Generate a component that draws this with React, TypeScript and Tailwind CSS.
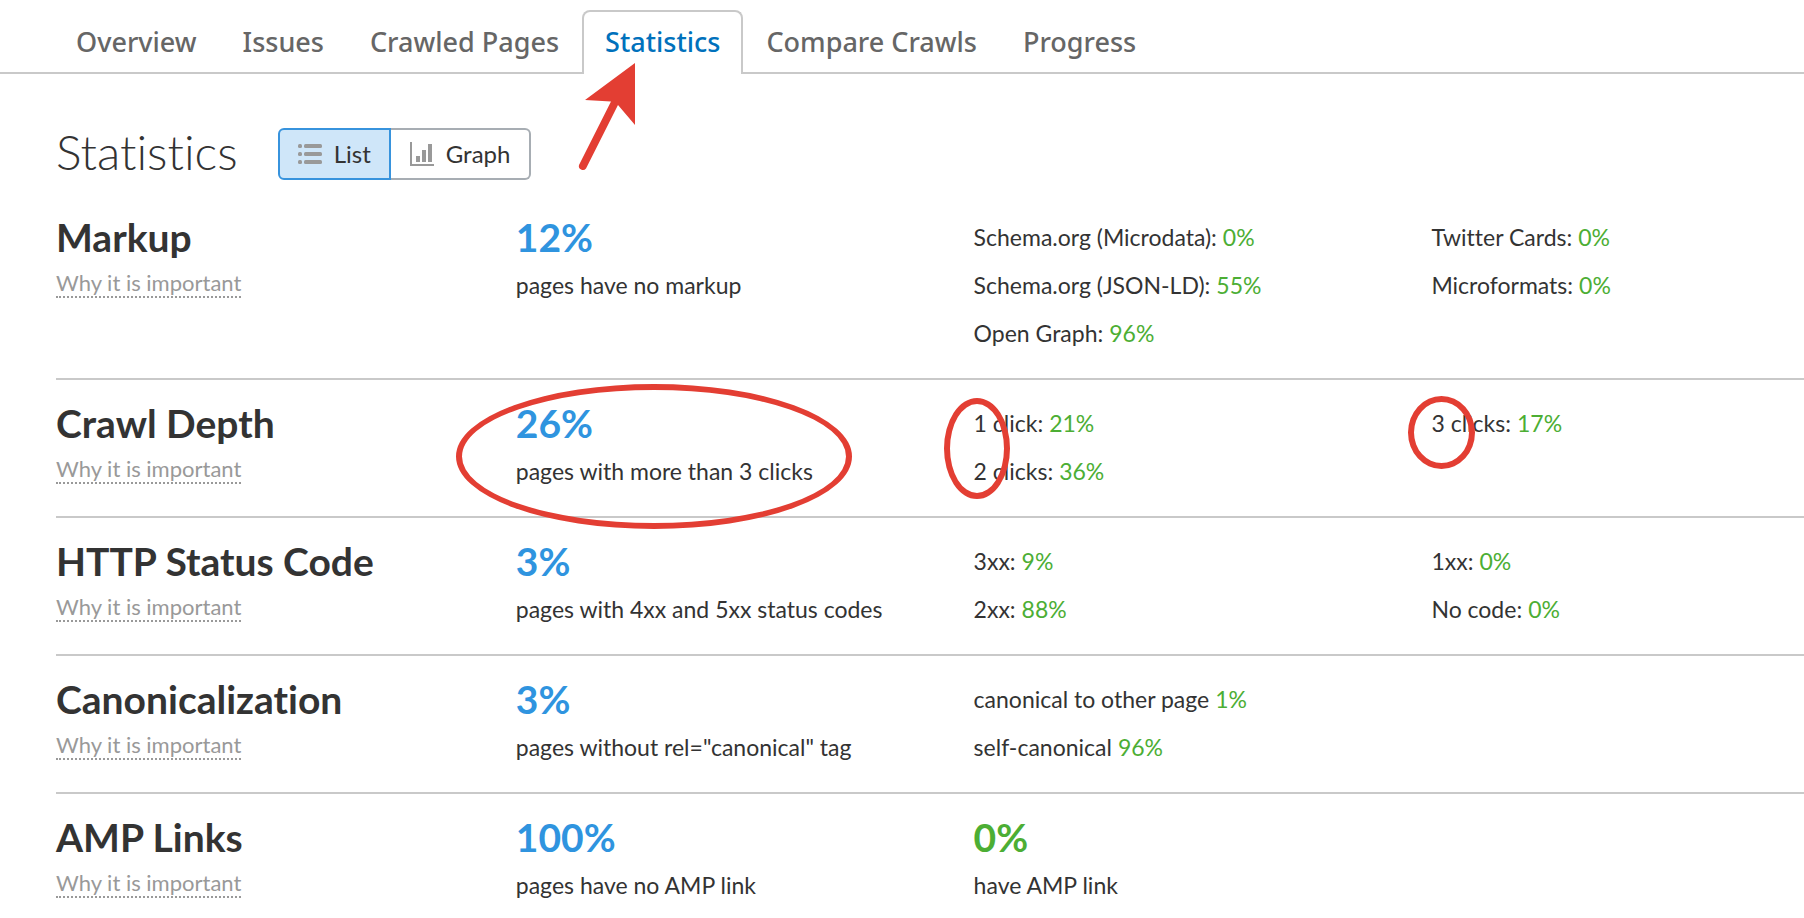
import { clsx } from "clsx"

type Entry = { label: string; value: string }

type Stat = {
  title: string
  value: string
  caption: string
  ring?: string
  columns: { entries: Entry[]; ring?: string }[]
  extra?: { value: string; caption: string }
}

const tabs = ["Overview", "Issues", "Crawled Pages", "Statistics", "Compare Crawls", "Progress"]

const stats: Stat[] = [
  {
    title: "Markup",
    value: "12%",
    caption: "pages have no markup",
    columns: [
      {
        entries: [
          { label: "Schema.org (Microdata):", value: "0%" },
          { label: "Schema.org (JSON-LD):", value: "55%" },
          { label: "Open Graph:", value: "96%" },
        ],
      },
      {
        entries: [
          { label: "Twitter Cards:", value: "0%" },
          { label: "Microformats:", value: "0%" },
        ],
      },
    ],
  },
  {
    title: "Crawl Depth",
    value: "26%",
    caption: "pages with more than 3 clicks",
    ring: "-left-[58px] -top-[15px] h-[145px] w-[396px]",
    columns: [
      {
        entries: [
          { label: "1 click:", value: "21%" },
          { label: "2 clicks:", value: "36%" },
        ],
        ring: "-left-7 -top-px h-[101px] w-[66px]",
      },
      {
        entries: [{ label: "3 clicks:", value: "17%" }],
        ring: "-left-[21px] -top-[3px] h-[73px] w-[67px]",
      },
    ],
  },
  {
    title: "HTTP Status Code",
    value: "3%",
    caption: "pages with 4xx and 5xx status codes",
    columns: [
      {
        entries: [
          { label: "3xx:", value: "9%" },
          { label: "2xx:", value: "88%" },
        ],
      },
      {
        entries: [
          { label: "1xx:", value: "0%" },
          { label: "No code:", value: "0%" },
        ],
      },
    ],
  },
  {
    title: "Canonicalization",
    value: "3%",
    caption: 'pages without rel="canonical" tag',
    columns: [
      {
        entries: [
          { label: "canonical to other page", value: "1%" },
          { label: "self-canonical", value: "96%" },
        ],
      },
    ],
  },
  {
    title: "AMP Links",
    value: "100%",
    caption: "pages have no AMP link",
    columns: [],
    extra: { value: "0%", caption: "have AMP link" },
  },
]

function Ring({ className }: { className: string }) {
  return (
    <span
      aria-hidden="true"
      className={clsx("pointer-events-none absolute z-10 rounded-[50%] border-6 border-[#e33e33]", className)}
    />
  )
}

function Arrow() {
  return (
    <svg
      aria-hidden="true"
      className="pointer-events-none absolute -left-1.5 top-[50px] z-10 h-[114px] w-[62px]"
      viewBox="0 0 62 114"
      fill="#e33e33"
    >
      <path d="M57 1 L7 38 L33 39.500 L1 103 A4 4 0 0 0 8 106.500 L40 43 L57 63 Z" />
    </svg>
  )
}

function ListIcon() {
  return (
    <svg aria-hidden="true" className="h-6 w-6" viewBox="0 0 24 24" fill="#999">
      {[2, 10, 18].map((y) => (
        <g key={y}>
          <rect x="0" y={y} width="4" height="4" rx="1.500" />
          <rect x="6" y={y} width="18" height="4" rx="1.500" />
        </g>
      ))}
    </svg>
  )
}

function GraphIcon() {
  return (
    <svg aria-hidden="true" className="h-6 w-6" viewBox="0 0 24 24" fill="#999">
      <path d="M0 0h2v22h22v2H0z" />
      <path d="M6 14h4v6H6zM12 8h4v12h-4zM18 2h4v18h-4z" />
    </svg>
  )
}

function StatRow({ stat }: { stat: Stat }) {
  return (
    <section className="grid grid-cols-[11fr_11fr_11fr_9fr] border-t-2 border-[#c9c9c9] pt-[19px] pb-[21px] whitespace-nowrap first:border-t-0">
      <div>
        <h2 className="text-[39px] leading-12 font-bold">{stat.title}</h2>
        <div className="flex h-12 items-start pt-[9px]">
          <a href="#why" className="border-b-2 border-dotted border-[#999] text-[22px] leading-[26px] text-[#999]">
            Why it is important
          </a>
        </div>
      </div>
      <div className="relative pl-0.5">
        <p className="text-[39px] leading-12 font-bold text-[#2f94df]">{stat.value}</p>
        <p className="leading-12">{stat.caption}</p>
        {stat.ring && <Ring className={stat.ring} />}
      </div>
      {stat.columns.map((column, i) => (
        <div key={i} className="relative pl-0.5">
          <ul>
            {column.entries.map((entry) => (
              <li key={entry.label} className="flex gap-1.5 leading-12">
                <span>{entry.label}</span>
                <span className="text-[#4cae34]">{entry.value}</span>
              </li>
            ))}
          </ul>
          {column.ring && <Ring className={column.ring} />}
        </div>
      ))}
      {stat.extra && (
        <div className="pl-0.5">
          <p className="text-[39px] leading-12 font-bold text-[#4cae34]">{stat.extra.value}</p>
          <p className="leading-12">{stat.extra.caption}</p>
        </div>
      )}
    </section>
  )
}

export default function App() {
  return (
    <div className="overflow-x-hidden bg-white font-['Lato','Noto_Sans',sans-serif] text-[23px] text-[#333] [font-variant-ligatures:none]">
      <nav className="flex border-b-2 border-[#c9c9c9] pt-2.5 pl-[53px] font-['Noto_Sans',sans-serif] text-[27px] font-medium">
        {tabs.map((tab) => {
          const active = tab === "Statistics"
          return (
            <div
              key={tab}
              className={clsx(
                "relative -mb-0.5 h-16 rounded-t-lg border-2 border-b-0 px-[21px]",
                active ? "border-[#c9c9c9] bg-white text-[#0071bc]" : "border-transparent text-[#666]",
              )}
            >
              <a href="#tab" aria-current={active ? "page" : undefined} className="block leading-15">
                {tab}
              </a>
              {active && <Arrow />}
            </div>
          )
        })}
      </nav>

      <main className="pl-14">
        <header className="flex items-center gap-10 pt-[54px] pb-3.5">
          <h1 className="pb-1 text-[48px] leading-12 font-light">Statistics</h1>
          <div className="flex h-13 text-[24px]">
            <button
              type="button"
              aria-pressed="true"
              className="flex items-center gap-3 rounded-l-md border-2 border-[#3793dd] bg-[#cfe6f9] px-[18px]"
            >
              <ListIcon />
              List
            </button>
            <button
              type="button"
              aria-pressed="false"
              className="flex items-center gap-3 rounded-r-md border-2 border-l-0 border-[#a7adb3] px-[19px]"
            >
              <GraphIcon />
              Graph
            </button>
          </div>
        </header>

        <div>
          {stats.map((stat) => (
            <StatRow key={stat.title} stat={stat} />
          ))}
        </div>
      </main>
    </div>
  )
}
